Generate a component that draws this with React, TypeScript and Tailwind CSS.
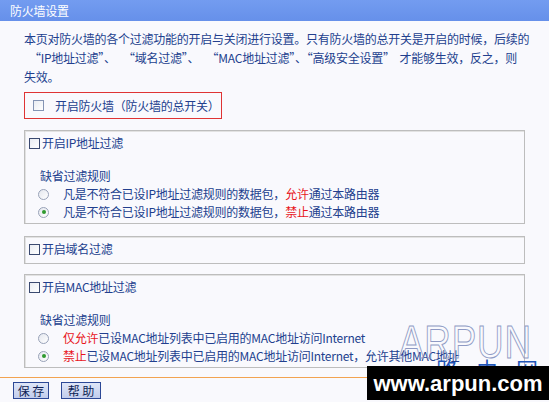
const ink = "text-[#223f8e]";

function CheckBox({ light = false }: { light?: boolean }) {
  return (
    <span
      className={`inline-block h-[11px] w-[11px] shrink-0 border bg-gradient-to-br from-[#e9ecf2] to-white ${
        light ? "border-[#8494b4]" : "border-[#3b4a70]"
      }`}
    />
  );
}

function Radio({ checked = false }: { checked?: boolean }) {
  return (
    <span className="flex h-[11px] w-[11px] shrink-0 items-center justify-center rounded-full border border-[#98a2b8] bg-gradient-to-br from-[#e4e7ee] to-white">
      {checked && <span className="h-[4px] w-[4px] rounded-full bg-[#2f9a2f]" />}
    </span>
  );
}

function FilterBox({
  title,
  rules,
}: {
  title: string;
  rules?: React.ReactNode[];
}) {
  return (
    <div
      className={`w-[501px] border border-[#bdbdbd] shadow-[inset_1px_1px_0_#e2e2e2] ${
        rules ? "h-[94px]" : "h-[28px]"
      }`}
    >
      <div className="mt-[5px] flex h-[14px] items-center gap-[2px] pl-[4px]">
        <CheckBox />
        <span className="leading-[14px]">{title}</span>
      </div>
      {rules && (
        <>
          <div className="mt-[17px] pl-[15px] leading-[18px]">缺省过滤规则</div>
          {rules.map((rule, i) => (
            <div key={i} className="flex h-[18px] items-center gap-[14px] whitespace-nowrap pl-[13px]">
              <Radio checked={i === 1} />
              <span className="leading-[18px]">{rule}</span>
            </div>
          ))}
        </>
      )}
    </div>
  );
}

const red = "text-[#e8161c]";
const btn =
  "flex h-[17px] items-center justify-center whitespace-pre border border-[#2c4896] bg-gradient-to-b from-[#dfe6f8] to-[#c2cdec] leading-none tracking-normal";

export default function App() {
  return (
    <div
      className={`relative h-[402px] w-[549px] overflow-hidden bg-[#f9f9fd] font-['Noto_Sans_CJK_SC',sans-serif] text-[12px] tracking-[-0.25px] ${ink}`}
    >
      <header className="flex h-[21px] items-center bg-gradient-to-b from-[#739cf0] to-[#6690ea] pl-[10px] text-white">
        防火墙设置
      </header>

      <div className="px-[24px]">
        <div className="pt-[8px] leading-[19px] whitespace-pre">
          <div>本页对防火墙的各个过滤功能的开启与关闭进行设置。只有防火墙的总开关是开启的时候，后续的</div>
          <div>{"  “IP地址过滤”、   “域名过滤”、   “MAC地址过滤”、“高级安全设置”  才能够生效，反之，则"}</div>
          <div>失效。</div>
        </div>

        <div className="mt-[6px] flex h-[27px] w-[198px] items-center gap-[11px] border border-[#df3434] pl-[8px]">
          <CheckBox light />
          <span>开启防火墙（防火墙的总开关）</span>
        </div>

        <div className="mt-[11px]">
          <FilterBox
            title="开启IP地址过滤"
            rules={[
              <>
                凡是不符合已设IP地址过滤规则的数据包，<span className={red}>允许</span>通过本路由器
              </>,
              <>
                凡是不符合已设IP地址过滤规则的数据包，<span className={red}>禁止</span>通过本路由器
              </>,
            ]}
          />
        </div>

        <div className="mt-[12px]">
          <FilterBox title="开启域名过滤" />
        </div>

        <div className="mt-[10px]">
          <FilterBox
            title="开启MAC地址过滤"
            rules={[
              <>
                <span className={red}>仅允许</span>已设MAC地址列表中已启用的MAC地址访问Internet
              </>,
              <>
                <span className={red}>禁止</span>已设MAC地址列表中已启用的MAC地址访问Internet，允许其他MAC地址
              </>,
            ]}
          />
        </div>
      </div>

      <div className="mt-[9px] h-px w-full bg-[#f2a351]" />

      <div className="mt-[4px] flex gap-[12px] pl-[13px] text-[#0f1f55]">
        <button className={`${btn} w-[36px]`}>{"保 存"}</button>
        <button className={`${btn} w-[40px]`}>{"帮 助"}</button>
      </div>

      {/* watermark */}
      <div className="pointer-events-none absolute left-[399px] top-[319px] origin-left scale-x-[0.8] whitespace-nowrap font-['Liberation_Sans',sans-serif] text-[46px] leading-none tracking-[1px] text-transparent [-webkit-text-stroke:1px_#8e99c4]">
        ARPUN
      </div>
      <div className="pointer-events-none absolute left-[436px] top-[357px] whitespace-nowrap text-[22px] leading-none tracking-[18px] text-[#1f55b8]">
        路由网
      </div>
      <div className="absolute left-[367px] top-[366px] flex h-[34px] w-[182px] items-center justify-center bg-black font-['Liberation_Sans',sans-serif] text-[22px] font-bold tracking-normal text-white">
        www.arpun.com
      </div>
    </div>
  );
}
